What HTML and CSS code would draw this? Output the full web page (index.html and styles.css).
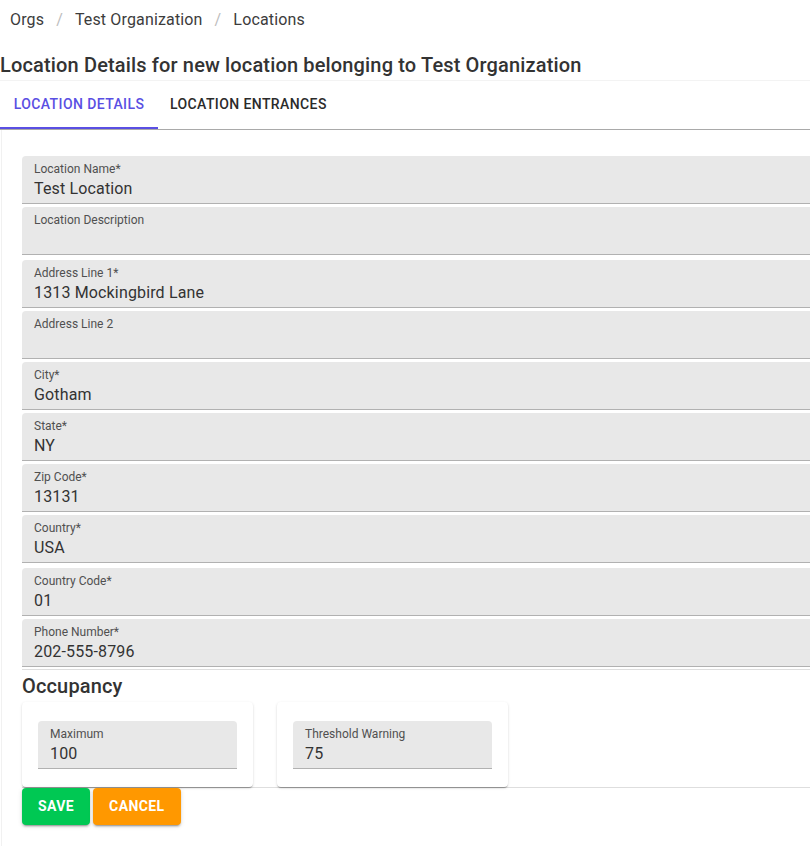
FILE: index.html
```html
<!DOCTYPE html>
<html lang="en">
<head>
<meta charset="utf-8">
<title>Location Details</title>
<link rel="stylesheet" href="styles.css">
</head>
<body>
<nav class="crumbs">
  <span class="crumb">Orgs</span><span class="sep">/</span>
  <span class="crumb">Test Organization</span><span class="sep">/</span>
  <span class="crumb">Locations</span>
</nav>
<h2 class="title">Location Details for new location belonging to Test Organization</h2>
<div class="tabs">
  <div class="tab tab-active">Location Details</div>
  <div class="tab">Location Entrances</div>
</div>
<div class="panel">
  <div class="fields">
    <div class="field"><label class="lbl">Location Name*</label><div class="val">Test Location</div></div>
    <div class="field"><label class="lbl">Location Description</label><div class="val"></div></div>
    <div class="field group"><label class="lbl">Address Line 1*</label><div class="val">1313 Mockingbird Lane</div></div>
    <div class="field"><label class="lbl">Address Line 2</label><div class="val"></div></div>
    <div class="field"><label class="lbl">City*</label><div class="val">Gotham</div></div>
    <div class="field"><label class="lbl">State*</label><div class="val">NY</div></div>
    <div class="field"><label class="lbl">Zip Code*</label><div class="val">13131</div></div>
    <div class="field"><label class="lbl">Country*</label><div class="val">USA</div></div>
    <div class="field group"><label class="lbl">Country Code*</label><div class="val">01</div></div>
    <div class="field"><label class="lbl">Phone Number*</label><div class="val">202-555-8796</div></div>
  </div>
  <hr class="divider first">
  <h3 class="section">Occupancy</h3>
  <div class="cards">
    <div class="card"><div class="field small"><label class="lbl">Maximum</label><div class="val">100</div></div></div>
    <div class="card"><div class="field small"><label class="lbl">Threshold Warning</label><div class="val">75</div></div></div>
  </div>
  <hr class="divider">
  <div class="actions">
    <button class="btn btn-save">Save</button>
    <button class="btn btn-cancel">Cancel</button>
  </div>
</div>
</body>
</html>
```
FILE: styles.css
```css
html, body {
  margin: 0;
  padding: 0;
  background: #fff;
  overflow-x: hidden;
}
body {
  font-family: Roboto, "Liberation Sans", sans-serif;
  color: rgba(0, 0, 0, 0.87);
}
.crumbs {
  display: flex;
  align-items: center;
  height: 40px;
  padding: 0 10px;
  font-size: 16px;
  line-height: 24px;
  letter-spacing: 0.15px;
  color: #3c3c3c;
}
.sep {
  color: #bdbdbd;
  margin: 0 12px 0 12px;
}
.title {
  margin: 0;
  padding: 13px 0 3px;
  font-size: 20px;
  line-height: 24px;
  font-weight: 500;
  letter-spacing: 0.15px;
  color: #333;
  white-space: nowrap;
}
.tabs {
  display: flex;
  height: 48px;
  border-top: 1px solid #f3f3f3;
  border-bottom: 1px solid #a9a9a9;
}
.tab {
  display: flex;
  align-items: center;
  justify-content: center;
  padding: 0 12px;
  font-size: 14px;
  font-weight: 500;
  letter-spacing: 0.4px;
  text-transform: uppercase;
  color: #2b2b2b;
  box-sizing: border-box;
  border-bottom: 2px solid transparent;
}
.tab-active {
  width: 158px;
  color: #5a4fe3;
  border-bottom-color: #5a4fe3;
}
.panel {
  padding: 26px 0 40px 20px;
  border-left: 1px solid #f1f1f1;
  margin-left: 1px;
}
.fields {
  display: flex;
  flex-direction: column;
  gap: 3px;
}
.field {
  width: 820px;
  height: 48px;
  box-sizing: border-box;
  background: #e8e8e8;
  border-radius: 4px 4px 0 0;
  border-bottom: 1px solid #b1b1b1;
  padding: 6px 12px 0;
}
.field.group {
  margin-top: 2px;
}
.lbl {
  display: block;
  font-size: 12px;
  line-height: 14px;
  color: #505050;
}
.val {
  margin-top: 2px;
  font-size: 16px;
  line-height: 22px;
  letter-spacing: 0.15px;
  color: #333;
}
.divider {
  margin: 2px 0 0;
  border: 0;
  border-top: 1px solid #dedede;
}
.section {
  margin: 4px 0 0;
  font-size: 20px;
  line-height: 24px;
  font-weight: 500;
  letter-spacing: 0.15px;
  color: #333;
}
.cards {
  display: flex;
  gap: 24px;
  margin-top: 4px;
}
.card {
  width: 231px;
  height: 85px;
  box-sizing: border-box;
  padding: 19px 16px 0;
  background: #fff;
  border-radius: 4px;
  box-shadow: 0 2px 1px -1px rgba(0,0,0,.2), 0 1px 1px 0 rgba(0,0,0,.14), 0 1px 3px 0 rgba(0,0,0,.12);
}
.field.small {
  width: 100%;
}
.cards + .divider {
  margin-top: 0;
}
.actions {
  display: flex;
  gap: 3px;
}
.btn {
  height: 37px;
  padding: 0 16px 1px;
  border: 0;
  border-radius: 4px;
  font-family: Roboto, "Liberation Sans", sans-serif;
  font-size: 14px;
  font-weight: 700;
  letter-spacing: 0.4px;
  text-transform: uppercase;
  color: #fff;
  box-shadow: 0 3px 1px -2px rgba(0,0,0,.2), 0 2px 2px 0 rgba(0,0,0,.14), 0 1px 5px 0 rgba(0,0,0,.12);
}
.btn-save {
  background: #00c853;
}
.btn-cancel {
  background: #ff9800;
}
```
